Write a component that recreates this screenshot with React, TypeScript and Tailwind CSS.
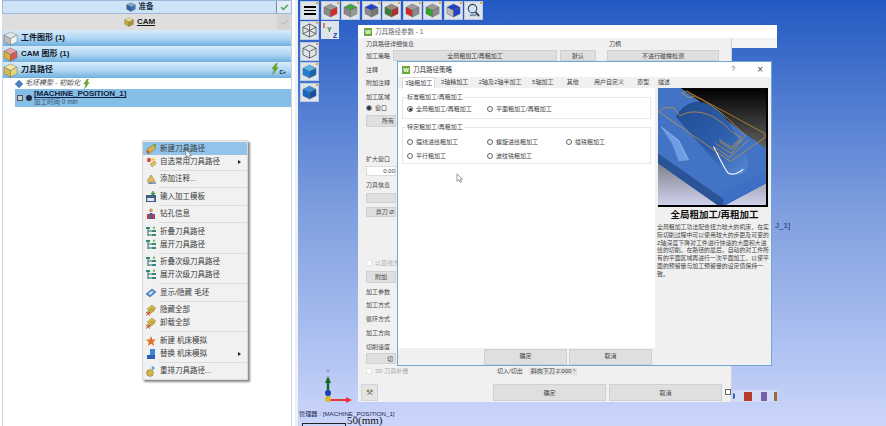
import { Check } from 'lucide-react';

const cjk = '"Liberation Sans", "Noto Sans CJK SC", sans-serif';

const Cube = ({ top, left, right, size = 'w-[15px] h-[15px]' }: { top: string; left: string; right: string; size?: string }) => (
  <svg viewBox="0 0 16 16" className={`${size} shrink-0`}>
    <path d="M8 1 15 4.5 8 8 1 4.5Z" fill={top} stroke="#555" strokeWidth="0.4" />
    <path d="M1 4.5 8 8V15L1 11.5Z" fill={left} stroke="#555" strokeWidth="0.4" />
    <path d="M15 4.5 8 8V15L15 11.5Z" fill={right} stroke="#555" strokeWidth="0.4" />
  </svg>
);

const Wire = ({ inner }: { inner?: boolean }) => (
  <svg viewBox="0 0 16 16" className="w-[15px] h-[15px]" fill="none" stroke="#444" strokeWidth="0.8">
    <path d="M8 1 15 4.5V11.5L8 15 1 11.5V4.5Z" />
    <path d="M1 4.5 8 8 15 4.5M8 8V15" />
    {inner && <path d="M8 1V8M1 11.5 8 8 15 11.5" />}
  </svg>
);

const Bolt = ({ className }: { className: string }) => (
  <svg viewBox="0 0 10 14" className={className}>
    <path d="M6 0 1 7H4L2 14 9 5H6L8 0Z" fill="#69a81f" stroke="#3f7a12" strokeWidth="0.4" />
  </svg>
);

const ToolBtn = ({ children }: { children: React.ReactNode }) => (
  <div className="relative w-[19px] h-[19px] bg-[#dfe3ea] border border-[#b9c9e4] flex items-center justify-center shrink-0">
    {children}
    <span className="absolute top-0 right-0 w-[2px] h-[2px] bg-[#e5a83a]" />
  </div>
);

const topTools = [
  ['#9a9a9a', '#8a8a8a', '#d22b2b'],
  ['#3da63d', '#8a8a8a', '#9a9a9a'],
  ['#2340c8', '#8a8a8a', '#777777'],
  ['#9a8a7a', '#3a7a3a', '#b03030'],
  ['#9a9a9a', '#d22b2b', '#8a8a8a'],
  ['#9a9a9a', '#2fa52f', '#8a8a8a'],
  ['#2340c8', '#b8b8b8', '#2340c8'],
];

const SectionHeader = ({ label, icon, bolt }: { label: string; icon: string[]; bolt?: boolean }) => (
  <div className="h-[16px] flex items-center bg-gradient-to-b from-[#d8ebfa] via-[#b2d7f3] to-[#6eb0e0] relative">
    <Cube top={icon[0]} left={icon[1]} right={icon[2]} />
    <span className="ml-[3px] text-[8px] font-bold text-[#101828]">{label}</span>
    {bolt && (
      <span className="absolute right-[5px] top-[1px] flex items-end">
        <Bolt className="w-[8px] h-[12px]" />
        <span className="text-[5px] leading-[6px] font-bold text-[#111]">C+</span>
      </span>
    )}
  </div>
);

type IconKind = 'tool' | 'star' | 'note' | 'template' | 'drill' | 'tree' | 'stock' | 'hide' | 'machine' | 'swap' | 'order';

const MenuIcon = ({ kind }: { kind: IconKind }) => (
  <svg viewBox="0 0 12 12" className="w-[12px] h-[12px] shrink-0">
    {kind === 'tool' && (
      <>
        <path d="M1 7 8 2 11 5 4 11Z" fill="#d3b24c" stroke="#7b6a2b" strokeWidth="0.5" />
        <path d="M8 1 11 1 11 4Z" fill="#5aa33a" />
        <circle cx="3" cy="9" r="1.4" fill="#d24a3a" />
      </>
    )}
    {kind === 'star' && (
      <>
        <circle cx="4" cy="4" r="2.2" fill="#d8504a" />
        <path d="M5 8 10 5 11 8 7 11Z" fill="#d9c25a" stroke="#8a7a36" strokeWidth="0.4" />
        <path d="M8 1 9 3 11 3.4 9 4.5 8 6 7.4 4 6 3.4 7.6 3Z" fill="#e7c43a" />
      </>
    )}
    {kind === 'note' && (
      <>
        <path d="M2 8 6 2 10 8 6 11Z" fill="#e0b860" stroke="#8d6f33" strokeWidth="0.5" />
        <path d="M3 10H11" stroke="#5f7fb0" strokeWidth="1.4" />
      </>
    )}
    {kind === 'template' && (
      <>
        <rect x="1" y="4" width="10" height="7" fill="#3d5f86" />
        <rect x="2.2" y="7" width="7" height="3" fill="#dfe8f0" />
        <path d="M8 0V4M6.2 2 8 4 9.8 2" stroke="#2f9a3a" strokeWidth="1.4" fill="none" />
      </>
    )}
    {kind === 'drill' && (
      <>
        <circle cx="6" cy="2.4" r="1.8" fill="#d09a6a" />
        <path d="M2 11V6H10V11Z" fill="#c83a3a" />
        <path d="M4.6 5H7.4V11H4.6Z" fill="#2f62b8" />
      </>
    )}
    {kind === 'tree' && (
      <>
        <path d="M3 2V10M3 5H7M3 9H7" stroke="#2d6d62" strokeWidth="1" fill="none" />
        <path d="M1 1H5V3H1ZM7 4H11V6H7ZM7 8H11V10H7Z" fill="#2f8a7a" />
        <path d="M9 0.5V3M7.8 1.8H10.2" stroke="#6aa83a" strokeWidth="0.9" />
      </>
    )}
    {kind === 'stock' && (
      <>
        <path d="M1 7 7 2 11 5 5 10Z" fill="#4f8ed4" stroke="#23538f" strokeWidth="0.5" />
        <path d="M3.5 6.5 7 4 8.5 5 5 8Z" fill="#d8e8f7" />
      </>
    )}
    {kind === 'hide' && (
      <>
        <path d="M2 5 7 1 11 4 6 8Z" fill="#d6bd4e" stroke="#8a7a30" strokeWidth="0.4" />
        <path d="M2 8 7 4 10 6 5 10Z" fill="#c6ab3e" stroke="#8a7a30" strokeWidth="0.4" />
        <path d="M1 8 5 11.5M5 8 1 11.5" stroke="#d6392b" strokeWidth="1" />
      </>
    )}
    {kind === 'machine' && <path d="M6 1 7.4 4.4 11 4.6 8.2 7 9.2 11 6 8.8 2.8 11 3.8 7 1 4.6 4.6 4.4Z" fill="#e0702a" />}
    {kind === 'swap' && (
      <>
        <path d="M2 7H10V11H2Z" fill="#2a62b4" />
        <path d="M5 1H10V7H5Z" fill="#3f86d4" />
      </>
    )}
    {kind === 'order' && (
      <>
        <circle cx="5" cy="8" r="3.4" fill="#d2b64a" stroke="#7b6a2b" strokeWidth="0.5" />
        <path d="M8 1V5M6.4 3H9.6" stroke="#3a8ac8" strokeWidth="1" />
      </>
    )}
  </svg>
);

type MenuItem = { label: string; icon: IconKind; arrow?: boolean; active?: boolean };

const menuGroups: MenuItem[][] = [
  [
    { label: '新建刀具路径', icon: 'tool', active: true },
    { label: '自选常用刀具路径', icon: 'star', arrow: true },
  ],
  [{ label: '添加注释...', icon: 'note' }],
  [{ label: '输入加工模板', icon: 'template' }],
  [{ label: '钻孔信息', icon: 'drill' }],
  [
    { label: '折叠刀具路径', icon: 'tree' },
    { label: '展开刀具路径', icon: 'tree' },
  ],
  [
    { label: '折叠次级刀具路径', icon: 'tree' },
    { label: '展开次级刀具路径', icon: 'tree' },
  ],
  [{ label: '显示/隐藏 毛坯', icon: 'stock' }],
  [
    { label: '隐藏全部', icon: 'hide' },
    { label: '卸载全部', icon: 'hide' },
  ],
  [
    { label: '新建 机床模拟', icon: 'machine' },
    { label: '替换 机床模拟', icon: 'swap', arrow: true },
  ],
  [{ label: '重排刀具路径...', icon: 'order' }],
];

const ContextMenu = () => (
  <div className="absolute left-[142px] top-[140px] w-[106px] bg-[#f1f1f1] border border-[#d8d8d8] shadow-[2px_2px_2px_#8a8a8a] py-px">
    {menuGroups.map((group, i) => (
      <div key={i}>
        {i > 0 && (
          <div className="h-[4.5px] flex items-center pl-[16px]">
            <div className="h-px w-full bg-[#dcdcdc]" />
          </div>
        )}
        {group.map((item) => (
          <div
            key={item.label}
            className={`h-[13px] flex items-center pl-[2px] pr-[6px] text-[7.5px] text-[#3a3a3a] ${item.active ? 'bg-[#92c3ea]' : ''}`}
          >
            <MenuIcon kind={item.icon} />
            <span className="ml-[3px] flex-1">{item.label}</span>
            {item.arrow && <span className="w-0 h-0 border-y-[2px] border-y-transparent border-l-[3px] border-l-[#222]" />}
          </div>
        ))}
      </div>
    ))}
  </div>
);

const Radio = ({ label, checked }: { label: string; checked?: boolean }) => (
  <div className="flex items-center gap-[3px] text-[6px] text-[#444] h-[14px]">
    <span className="w-[6px] h-[6px] rounded-full border border-[#666] bg-white flex items-center justify-center shrink-0">
      {checked && <span className="w-[3px] h-[3px] rounded-full bg-[#333]" />}
    </span>
    {label}
  </div>
);

const Group = ({ title, className, children }: { title: string; className: string; children: React.ReactNode }) => (
  <div className={`relative border border-[#e6e6e6] grid grid-cols-[80px_79px_1fr] pl-[4px] ${className}`}>
    <span className="absolute -top-[5px] left-[3px] bg-white px-px text-[6px] leading-[8px] text-[#444]">{title}</span>
    {children}
  </div>
);

const tabs = [
  ['3轴粗加工', 'w-[34px]'],
  ['3轴精加工', 'w-[39px]'],
  ['2轴及2轴半加工', 'w-[54px]'],
  ['5轴加工', 'w-[33px]'],
  ['其他', 'w-[28px]'],
  ['用户自定义', 'w-[46px]'],
  ['原型', 'w-[24px]'],
];

const PartImage = () => (
  <svg viewBox="0 0 109 118" className="w-[110px] h-[119px] border-b-2 border-r-2 border-black block">
    <defs>
      <linearGradient id="bg" x1="0" y1="0" x2="0" y2="1">
        <stop offset="0" stopColor="#000" />
        <stop offset="0.45" stopColor="#555" />
        <stop offset="1" stopColor="#cfd1ec" />
      </linearGradient>
      <linearGradient id="dome" x1="0" y1="0" x2="1" y2="1">
        <stop offset="0" stopColor="#1f4a90" />
        <stop offset="0.6" stopColor="#2f60ae" />
        <stop offset="1" stopColor="#5a8ad8" />
      </linearGradient>
    </defs>
    <rect width="109" height="118" fill="url(#bg)" />
    <path d="M0 0H23L109 61V96L68 118H60L0 76Z" fill="#4273c4" />
    <path d="M0 76 60 118H68L109 96V90L66 112 0 66Z" fill="#2a5398" />
    <path d="M66 118V104L109 84V96L68 118Z" fill="#3d70c4" />
    <path d="M18 29C24 18 34 13 43 14 58 16 70 30 76 43 84 58 91 68 91 76 90 84 85 88 79 88L68 86Z" fill="url(#dome)" />
    <path d="M56 59C62 70 66 80 71 86 76 88 82 86 86 82" stroke="#e8f2ff" strokeWidth="1.2" fill="none" />
    <path d="M3 39 21 53 31 73 21 74 14 56Z" fill="#6e9de4" />
    <path d="M3 39 21 53 31 73" stroke="#b7d0f5" strokeWidth="0.6" fill="none" />
    <g stroke="#d99a2a" strokeWidth="0.7" fill="none">
      <path d="M29 3 108 46V50L73 74 1 24 6 20H16L22 28C36 20 56 24 74 44L84 50 74 60 62 52" />
      <path d="M29 3 36 8 32 10 24 5ZM36 8C60 18 76 36 88 48L74 66 58 56" />
      <path d="M58 60 72 70 92 52M62 54 74 62 84 52" />
    </g>
  </svg>
);

const Btn = ({ className, children }: { className: string; children?: React.ReactNode }) => (
  <div className={`bg-[#dfdfdf] border border-[#d0d0d0] flex items-center ${className}`}>{children}</div>
);

export default function App() {
  return (
    <div className="relative w-[886px] h-[426px] overflow-hidden flex bg-white" style={{ fontFamily: cjk }}>
      {/* left manager panel */}
      <div className="w-[295px] shrink-0 h-full pl-[2px] pr-[3px] bg-white">
        <div className="h-[14px] flex bg-[#cfe3f6] border border-[#9db8d8]">
          <div className="flex-1 flex items-center justify-center gap-[3px] text-[7.5px] font-bold text-[#24364d]">
            <Cube top="#7aa6d8" left="#2d5f9e" right="#3d78bd" size="w-[10px] h-[10px]" />准备
          </div>
          <div className="w-[15px] flex items-center justify-center bg-[#e2edf8] border-l border-[#6e8fc4]">
            <Check size={9} strokeWidth={4} className="text-[#5ca35c]" />
          </div>
        </div>
        <div className="h-[16px] flex bg-[#dedede]">
          <div className="flex-1 flex items-center justify-center gap-[3px] text-[8px] font-bold text-[#1a1a1a] underline">
            <Cube top="#efe08a" left="#c9a93a" right="#b0922e" size="w-[10px] h-[10px]" />CAM
          </div>
          <div className="w-[15px] flex items-center justify-center bg-[#d4d4d4]">
            <Check size={9} strokeWidth={3} className="text-[#bdbdbd]" />
          </div>
        </div>
        <div className="border-x border-[#c8d2e2] h-[396px]">
          <SectionHeader label="工件图形 (1)" icon={['#e4e4e4', '#bcbcbc', '#f2f2f2']} />
          <SectionHeader label="CAM 图形 (1)" icon={['#e9a0a0', '#d9b23a', '#d65a5a']} />
          <SectionHeader label="刀具路径" icon={['#f3e6a0', '#d4ba52', '#e8d67e']} bolt />
          <div className="h-[11px] pl-[13px] flex items-center gap-[3px] text-[7px] italic text-[#444]">
            <span className="w-[6px] h-[6px] bg-[#4a7fc0] rotate-45" />毛坯模型 - 初始化
            <Bolt className="w-[7px] h-[10px]" />
          </div>
          <div className="ml-[12px] h-[18px] bg-[#85bfe8] flex items-center pl-[2px]">
            <span className="w-[6px] h-[6px] bg-[#ccc] border border-[#555] mr-[3px]" />
            <span className="w-[6px] h-[6px] rounded-full bg-[#1e2a44] mr-[2px]" />
            <div className="leading-none">
              <div className="text-[8px] font-bold text-[#14213d] underline tracking-[-0.1px]">[MACHINE_POSITION_1]</div>
              <div className="text-[6.5px] text-[#3c4c66] mt-px">加工时间 0 min</div>
            </div>
          </div>
        </div>
      </div>

      {/* graphics viewport */}
      <div className="flex-1 h-full pl-[3px] bg-[#eef2f4]">
        <div className="h-full bg-gradient-to-b from-[#2359c2] via-[#7f9fdf] to-[#ccd6fb] pt-px">
          <div className="flex gap-[1.5px] ml-[2px]">
            <ToolBtn>
              <div className="flex flex-col gap-[2px] w-[12px]">
                <div className="h-[1.5px] bg-black" />
                <div className="h-[1.5px] bg-black" />
                <div className="h-[1.5px] bg-black" />
              </div>
            </ToolBtn>
            {topTools.map((c, i) => (
              <ToolBtn key={i}><Cube top={c[0]} left={c[1]} right={c[2]} /></ToolBtn>
            ))}
            <ToolBtn>
              <svg viewBox="0 0 16 16" className="w-[15px] h-[15px]" fill="none">
                <circle cx="7" cy="6" r="4.5" fill="#cfe4f7" stroke="#33475e" strokeWidth="1.2" />
                <path d="M4 13H11" stroke="#7a8fa8" strokeWidth="2" />
                <path d="M10 9.5 14 14" stroke="#33475e" strokeWidth="2" />
              </svg>
            </ToolBtn>
          </div>
          <div className="flex gap-[2px] ml-[2px] mt-px">
            <div className="flex flex-col gap-[1.5px]">
              <ToolBtn><Wire inner /></ToolBtn>
              <ToolBtn><Wire /></ToolBtn>
              <ToolBtn><Cube top="#5db4ee" left="#1c7ed6" right="#1567b5" /></ToolBtn>
              <ToolBtn><Cube top="#3b8fe0" left="#1a64c4" right="#1150a5" /></ToolBtn>
            </div>
            <div className="w-[18px] h-[18px] bg-[#dfe3ea] relative text-[7px] font-bold leading-none">
              <span className="absolute left-[2px] top-[1px] text-[#c22]">I</span>
              <span className="absolute left-[6px] top-[5px] text-[#2a8a2a]">Y</span>
              <span className="absolute left-[12px] top-[11px] text-[#23a]">Z</span>
            </div>
          </div>
        </div>
      </div>

      {/* axis triad and scale */}
      <svg viewBox="0 0 60 40" className="absolute left-[310px] top-[366px] w-[60px] h-[40px]">
        <text x="16" y="7" fontSize="6" fill="#5a6f9a" fontFamily="Liberation Sans">Y</text>
        <path d="M18 34H38" stroke="#e33" strokeWidth="2" />
        <path d="M36 31 42 34 36 37Z" fill="#e33" />
        <path d="M18 32V15" stroke="#176b22" strokeWidth="2.5" />
        <path d="M15 17 18 10 21 17Z" fill="#176b22" />
        <circle cx="18" cy="27" r="3" fill="#1f3fb5" />
        <circle cx="18" cy="33" r="3" fill="#d8b92a" />
      </svg>
      <div className="absolute left-[299px] top-[410px] text-[6.2px] leading-[8px] text-[#1b2b4d]">管理器 : [MACHINE_POSITION_1]</div>
      <div className="absolute left-[347px] top-[415px] text-[11px] leading-[11px] text-[#111]" style={{ fontFamily: '"Liberation Serif", serif' }}>50(mm)</div>
      <div className="absolute left-[302px] top-[423px] w-[44px] h-[3px] border-x border-t border-[#222]" />
      <div className="absolute left-[775px] top-[220px] text-[8px] text-[#1b2b6d]">J_1]</div>

      <ContextMenu />

      {/* back dialog */}
      <div className="absolute left-[358px] top-[25px] w-[419px] h-[23px] bg-white flex items-start">
        <div className="h-[13px] flex items-center pl-[6px] gap-[3px]">
          <span className="w-[8px] h-[8px] bg-[#6aa83a] text-white font-bold text-[6px] leading-[8px] text-center">W</span>
          <span className="text-[6.5px] text-[#666]">刀具路径参数 - 1</span>
        </div>
        <div className="absolute left-[374px] right-0 top-[13px] bottom-0 bg-[#f3f3f3]" />
      </div>
      <div className="absolute left-[358px] top-[38px] w-[374px] h-[364px] bg-[#f0f0f0] border-r border-[#d0d0d0] text-[6px] leading-[10px] text-[#444] pl-[8px] pr-[10px]">
        <div className="h-[10px] mt-px flex">
          <span>刀具路径详细信息</span>
          <span className="ml-[195px]">刀柄</span>
        </div>
        <div className="flex items-center h-[11px] mt-px">
          <span className="w-[27px]">加工策略</span>
          <Btn className="w-[164px] h-[11px] justify-center">全局粗加工/再粗加工</Btn>
          <Btn className="w-[36px] h-[11px] ml-[3px] justify-center">默认</Btn>
          <Btn className="w-[112px] h-[11px] ml-[11px] justify-center">不进行碰撞检测</Btn>
        </div>
        <div className="mt-[4px] h-[10px]">注释</div>
        <div className="mt-[3px] h-[10px]">附加注释</div>
        <div className="mt-[4px] h-[10px]">加工区域</div>
        <div className="mt-px h-[10px] flex items-center gap-[3px]">
          <span className="w-[6px] h-[6px] rounded-full bg-[#333] border border-[#999]" />窗口
        </div>
        <Btn className="mt-[2px] h-[12px] w-[30px] justify-end pr-px">所有</Btn>
        <div className="mt-[27px] h-[10px]">扩大窗口</div>
        <div className="mt-[2px] h-[10px] w-[30px] bg-white border border-[#ddd] text-right leading-[8px]">0.00</div>
        <div className="mt-[4px] h-[10px]">刀具信息</div>
        <Btn className="h-[10px] w-[30px] mt-[3px]" />
        <Btn className="h-[10px] w-[30px] mt-[4px] justify-end pr-px">鼻刀 Ø</Btn>
        <div className="mt-[42px] h-[8px] flex items-center gap-[3px] text-[#aaa]">
          <span className="w-[6px] h-[6px] bg-white border border-[#e5e5e5]" />以直线方
        </div>
        <Btn className="mt-[4px] h-[12px] w-[30px] justify-center">附加</Btn>
        <div className="mt-[3.5px] h-[9px]">加工参数</div>
        <div className="mt-[4px] h-[9px]">加工方式</div>
        <div className="mt-[5px] h-[9px]">循环方式</div>
        <div className="mt-[5px] h-[9px]">加工方向</div>
        <div className="mt-[5px] h-[9px]">切削速度</div>
        <Btn className="mt-[2.5px] h-[11px] w-[30px] justify-end pr-[2px]">切</Btn>
        <div className="mt-[3px] h-[8px] flex items-center gap-[3px] text-[#aaa]">
          <span className="w-[6px] h-[6px] bg-white border border-[#e5e5e5]" />3D 刀具补偿
        </div>
        <div className="absolute left-[139px] top-[328px] flex gap-[6px] items-center text-[#444]">
          <span>切入/切出</span>
          <span className="bg-[#dfdfdf] px-[2px] leading-[7px]">斜向下刀 2.000 °</span>
        </div>
        <div className="absolute left-[3px] top-[346px] flex items-center">
          <div className="w-[17px] h-[17px] bg-[#e4e4e4] border border-[#d5d5d5] flex items-center justify-center text-[#8a6a3a] text-[8px]">⚒</div>
          <Btn className="w-[113px] h-[17px] ml-[115px] justify-center">确定</Btn>
          <Btn className="w-[113px] h-[17px] ml-[3px] justify-center">取消</Btn>
        </div>
      </div>

      {/* strip of icons the dialog leaves uncovered */}
      <div className="absolute left-[732px] top-[390px] w-[45px] h-[12px] bg-[#d3dcf6] flex items-center gap-[3px] pl-[1px]">
        <span className="w-[3px] h-[6px] rounded-r-full bg-[#2a62b4]" />
        <span className="w-[9px] h-[9px] ml-[6px] bg-[#b83a2a]" />
        <span className="w-[8px] h-[9px] ml-[6px] bg-[#7a5ea8]" />
        <span className="w-[4px] h-[9px] ml-[4px] bg-[#9a6a3a]" />
      </div>
      <div className="absolute left-[725px] top-[389px] w-[6px] h-[6px] bg-white border border-[#666]" />

      {/* front dialog */}
      <div className="absolute left-[397px] top-[61px] w-[375px] h-[305px] bg-[#f0f0f0] border border-[#6fa8d6] flex flex-col text-[6px] text-[#444]">
        <div className="h-[15px] bg-white flex items-center pl-[4px] gap-[3px] shrink-0">
          <span className="w-[8px] h-[8px] bg-[#6aa83a] text-white font-bold text-[6px] leading-[8px] text-center">W</span>
          <span className="text-[6.5px] text-[#333] flex-1">刀具路径策略</span>
          <span className="text-[7px] text-[#555] mr-[19px]">?</span>
          <span className="text-[10px] leading-none text-[#444] mr-[8px]">×</span>
        </div>
        <div className="flex flex-1">
          <div className="w-[257px] flex flex-col">
            <div className="flex h-[11px] items-center pl-[4px]">
              {tabs.map(([t, w], i) => (
                <div key={t} className={`${w} h-full flex items-center justify-center ${i === 0 ? 'bg-white border-x border-t border-[#d8d8d8]' : ''}`}>{t}</div>
              ))}
            </div>
            <div className="h-[260px] bg-white px-[4px] pt-[9px] flex flex-col gap-[8px]">
              <Group title="标准粗加工/再粗加工" className="h-[22px] pt-[4px]">
                <Radio label="全局粗加工/再粗加工" checked />
                <Radio label="平面粗加工/再粗加工" />
              </Group>
              <Group title="特定粗加工/再粗加工" className="h-[37px] pt-[7px]">
                <Radio label="摆线进给粗加工" />
                <Radio label="螺旋进给粗加工" />
                <Radio label="插铣粗加工" />
                <Radio label="平行粗加工" />
                <Radio label="波纹铣粗加工" />
              </Group>
            </div>
            <div className="flex-1 flex items-center justify-end gap-[2px] pr-[3px]">
              <Btn className="w-[83px] h-[16px] justify-center">确定</Btn>
              <Btn className="w-[83px] h-[16px] justify-center">取消</Btn>
            </div>
          </div>
          <div className="flex-1 pl-[2px] pr-[3px] flex flex-col">
            <div className="h-[11px] flex items-center pl-[1px]">描述</div>
            <div className="pl-[1px]"><PartImage /></div>
            <div className="mt-[1px] text-center text-[9.5px] font-bold text-[#111] leading-[14px]">全局粗加工/再粗加工</div>
            <p className="text-[5.9px] leading-[7.8px] mt-[2px] text-[#444] w-[115px]">
              全局粗加工功法配合扭力较大的机床，在实<br />
              际切削过程中可以使用较大的步距及可变的<br />
              Z轴深度下降对工件进行快速的大面积大进<br />
              给的切削。在路径的最后，自动的对工件所<br />
              有的平面区域再进行一次平面加工，以使平<br />
              面的预留量与加工预留量的设定值保持一<br />
              致。
            </p>
          </div>
        </div>
      </div>

      {/* mouse pointers */}
      <svg viewBox="0 0 8 12" className="absolute left-[456px] top-[173px] w-[7px] h-[10px]">
        <path d="M1 1V10L3 8 5 11.5 6.5 10.5 4.8 7.5H7.5Z" fill="#fff" stroke="#555" strokeWidth="0.7" />
      </svg>
      <svg viewBox="0 0 8 12" className="absolute left-[185px] top-[149px] w-[7px] h-[10px]">
        <path d="M1 1V10L3 8 5 11.5 6.5 10.5 4.8 7.5H7.5Z" fill="#fff" stroke="#555" strokeWidth="0.7" />
      </svg>
    </div>
  );
}
